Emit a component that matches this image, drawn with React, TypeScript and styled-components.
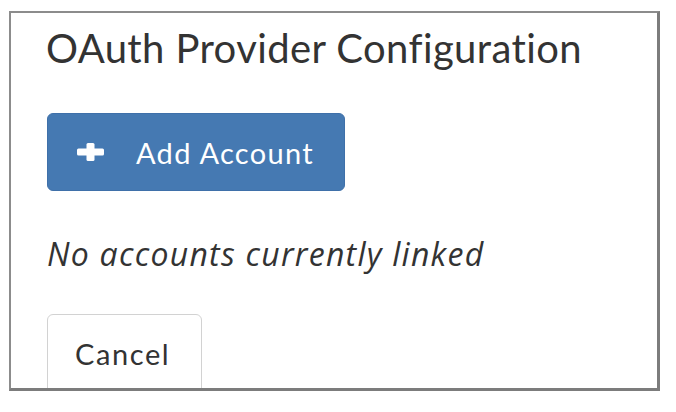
import styled, { createGlobalStyle } from "styled-components";

const GlobalStyle = createGlobalStyle`
  body {
    margin: 0;
    background: #fff;
    font-family: Lato, "Open Sans", sans-serif;
    color: #333;
  }
`;

const Frame = styled.section`
  box-sizing: border-box;
  display: flex;
  flex-direction: column;
  align-items: flex-start;
  width: 651px;
  height: 380px;
  margin: 11px 0 0 9px;
  padding: 0 0 0 36px;
  border: 2px solid #8c8c8c;
  border-right: 3px solid #7c7c7c;
  border-bottom: 3px solid #7c7c7c;
  overflow: hidden;
  & > * {
    flex-shrink: 0;
  }
`;

const Title = styled.h2`
  margin: 10px 0 0 -1px;
  font-size: 40px;
  font-weight: 400;
  line-height: 50px;
  letter-spacing: 0.4px;
  color: #333;
`;

const Button = styled.button<{ $primary?: boolean }>`
  display: flex;
  box-sizing: border-box;
  font-family: inherit;
  font-size: 29px;
  line-height: 35px;
  border-radius: 6px;
  cursor: pointer;
  border: 1px solid ${({ $primary }) => ($primary ? "#3f70a9" : "#d2d2d2")};
  background: ${({ $primary }) => ($primary ? "#4579b2" : "#fff")};
  color: ${({ $primary }) => ($primary ? "#fff" : "#333")};
`;

const AddButton = styled(Button)`
  align-items: center;
  gap: 32px;
  margin-top: 40px;
  height: 78px;
  width: 298px;
  padding: 0 0 0 29px;
  letter-spacing: 1.3px;
  svg {
    width: 27px;
    height: 18px;
  }
`;

const CancelButton = styled(Button)`
  align-items: flex-start;
  margin-top: 42px;
  height: 90px;
  width: 155px;
  padding: 21px 0 0 27px;
  letter-spacing: 1.6px;
`;

const Message = styled.p`
  margin: 45px 0 0;
  font-family: "Open Sans", Lato, sans-serif;
  font-size: 32px;
  font-style: italic;
  line-height: 36px;
  letter-spacing: 1.25px;
  color: #333;
`;

export default function App() {
  return (
    <>
      <GlobalStyle />
      <Frame>
        <Title>OAuth Provider Configuration</Title>
        <AddButton $primary>
          <svg viewBox="0 0 27 18" fill="currentColor">
            <rect x="9.5" y="0" width="8" height="18" rx="1.5" />
            <rect x="0" y="5.5" width="27" height="7" rx="1.5" />
          </svg>
          Add Account
        </AddButton>
        <Message>No accounts currently linked</Message>
        <CancelButton>Cancel</CancelButton>
      </Frame>
    </>
  );
}
